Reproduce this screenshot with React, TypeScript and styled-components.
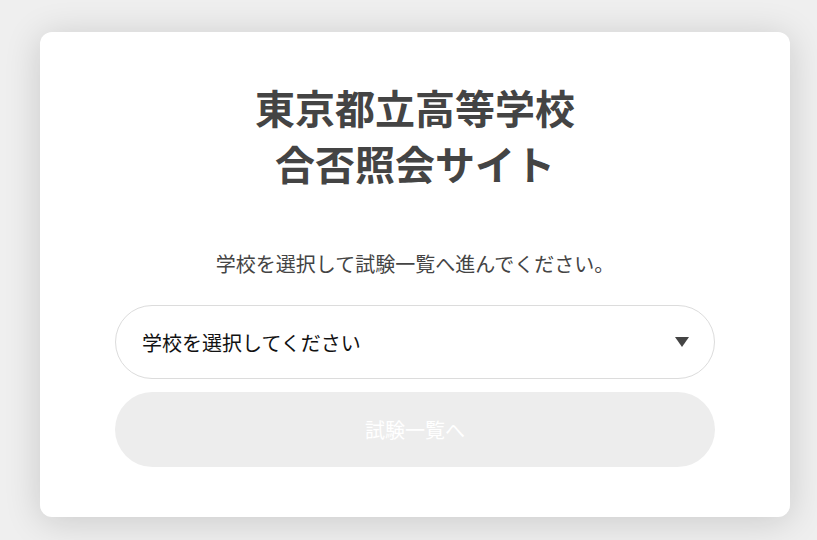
import React, { useState } from "react";
import styled, { createGlobalStyle } from "styled-components";

const GlobalStyle = createGlobalStyle`
  html, body {
    margin: 0;
    padding: 0;
    background: #efefef;
    font-family: "Noto Sans CJK JP", "Noto Sans", sans-serif;
  }
`;

const Page = styled.div`
  padding: 32px 27px 23px 40px;
`;

const Card = styled.main`
  width: 750px;
  box-sizing: border-box;
  background: #fff;
  border-radius: 12px;
  box-shadow: 0 4px 36px rgba(0, 0, 0, 0.16);
  padding: 47px 75px 50px;
  display: flex;
  flex-direction: column;
  align-items: stretch;
`;

const Title = styled.h1`
  margin: 0;
  font-size: 40px;
  line-height: 56px;
  font-weight: 700;
  color: #444;
  text-align: center;
`;

const Lead = styled.p`
  margin: 58px 0 26px;
  font-size: 20px;
  line-height: 30px;
  color: #444;
  text-align: center;
`;

const SelectBox = styled.div`
  position: relative;
`;

const SchoolSelect = styled.select`
  appearance: none;
  width: 100%;
  height: 74px;
  box-sizing: border-box;
  border: 1px solid #dcdcdc;
  border-radius: 37px;
  background: #fff;
  padding: 0 60px 0 26px;
  font-family: inherit;
  font-size: 20px;
  color: #111;
  outline: none;
`;

const Caret = styled.svg`
  position: absolute;
  right: 26px;
  top: 32px;
  pointer-events: none;
`;

const Submit = styled.button<{ $active: boolean }>`
  margin-top: 13px;
  height: 75px;
  border: none;
  border-radius: 38px;
  background: ${(p) => (p.$active ? "#444" : "#ededed")};
  color: #fff;
  font-family: inherit;
  font-size: 20px;
  cursor: ${(p) => (p.$active ? "pointer" : "default")};
`;

const schools = ["日比谷高等学校", "西高等学校", "国立高等学校", "戸山高等学校"];

export default function App() {
  const [school, setSchool] = useState("");

  return (
    <Page>
      <GlobalStyle />
      <Card>
        <Title>
          東京都立高等学校
          <br />
          合否照会サイト
        </Title>
        <Lead>学校を選択して試験一覧へ進んでください。</Lead>
        <SelectBox>
          <SchoolSelect value={school} onChange={(e) => setSchool(e.target.value)}>
            <option value="">学校を選択してください</option>
            {schools.map((s) => (
              <option key={s} value={s}>
                {s}
              </option>
            ))}
          </SchoolSelect>
          <Caret width="14" height="10" viewBox="0 0 14 10">
            <polygon points="0,0 14,0 7,10" fill="#444" />
          </Caret>
        </SelectBox>
        <Submit $active={school !== ""} disabled={school === ""}>
          試験一覧へ
        </Submit>
      </Card>
    </Page>
  );
}
